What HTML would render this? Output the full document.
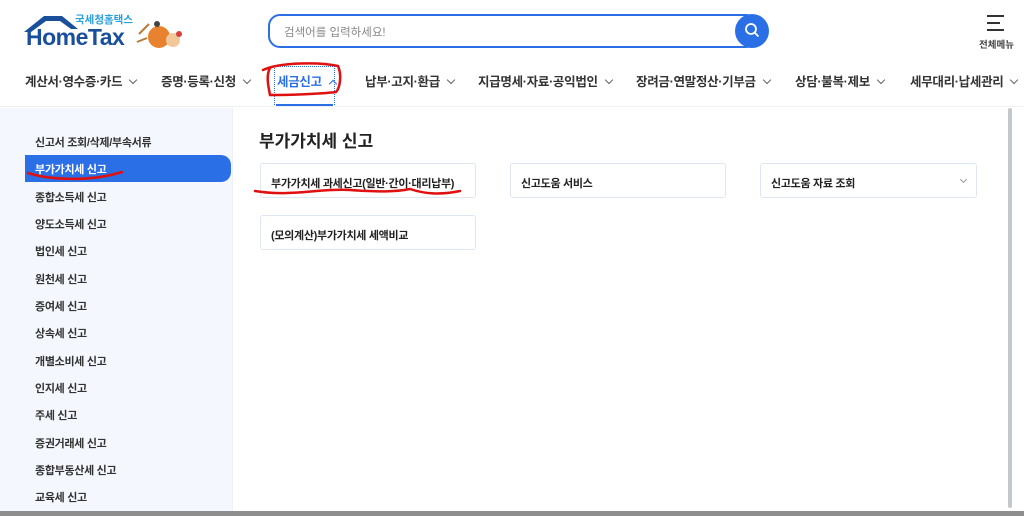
<!DOCTYPE html>
<html><head><meta charset="utf-8"><style>
*{margin:0;padding:0;box-sizing:border-box}
body{width:1024px;height:516px;overflow:hidden;background:#fff;font-family:"Liberation Sans","Noto Sans CJK KR",sans-serif;position:relative;color:#222}
.a{position:absolute;white-space:nowrap}
.nav{top:71px;font-size:12.5px;font-weight:bold;color:#333;letter-spacing:-0.3px}
.chev{display:inline-block;width:6px;height:6px;border-right:1.3px solid #666;border-bottom:1.3px solid #666;transform:rotate(45deg);margin-left:8px;position:relative;top:-3px}
.side{position:absolute;left:0;top:108px;width:233px;height:404px;background:#f4f7fd;border-right:1px solid #eef0f5}
.si{position:absolute;left:35px;font-size:11px;font-weight:bold;color:#333;letter-spacing:-0.3px}
.card{position:absolute;border:1px solid #dfe6f3;border-radius:3px;background:#fff;height:35px;font-size:11px;font-weight:bold;padding:11px 0 0 10px;color:#222;white-space:nowrap;letter-spacing:-0.3px}
</style></head><body>
<!-- logo -->
<svg class="a" style="left:22px;top:12px" width="110" height="40">
<path d="M2 20 L22 4 L40 4 L56 17 L49 17 L38 9 L24 9 L9 20 Z" fill="#1a4f9c"/>
</svg>
<div class="a" style="left:75px;top:12px;font-size:10.5px;color:#2aa0dc;font-weight:bold">국세청홈택스</div>
<div class="a" style="left:26px;top:24px;font-size:23px;font-weight:bold;color:#1a4f9c;letter-spacing:-0.5px">HomeTax</div>
<svg class="a" style="left:135px;top:16px" width="50" height="34">
<circle cx="24" cy="21" r="11" fill="#e9822e"/><circle cx="38" cy="24" r="7" fill="#f2c79a"/><path d="M4 18 L14 8 M2 26 L12 22" stroke="#b87a3b" stroke-width="2"/><circle cx="22" cy="8" r="3" fill="#444"/><circle cx="44" cy="18" r="3" fill="#d94040"/>
</svg>
<!-- search -->
<div class="a" style="left:268px;top:14px;width:490px;height:34px;border:2px solid #2b6fe6;border-radius:12px"></div>
<div class="a" style="left:284px;top:24px;font-size:11.5px;color:#888">검색어를 입력하세요!</div>
<div class="a" style="left:735px;top:14px;width:34px;height:34px;border-radius:50%;background:#2b6fe6"></div>
<svg class="a" style="left:744px;top:22px" width="16" height="16"><circle cx="7" cy="7" r="5" fill="none" stroke="#fff" stroke-width="1.8"/><path d="M11 11 L14.5 14.5" stroke="#fff" stroke-width="1.8"/></svg>
<!-- menu -->
<div class="a" style="left:987px;top:15px;width:17px;height:1.5px;background:#333"></div>
<div class="a" style="left:987px;top:22px;width:13px;height:1.5px;background:#333"></div>
<div class="a" style="left:987px;top:29px;width:17px;height:1.5px;background:#333"></div>
<div class="a" style="left:979px;top:37px;font-size:9.5px;font-weight:bold;color:#444">전체메뉴</div>
<!-- nav -->
<div class="a nav" style="left:25px">계산서·영수증·카드<span class="chev"></span></div>
<div class="a nav" style="left:161px">증명·등록·신청<span class="chev"></span></div>
<div class="a nav" style="left:277px;color:#2b6fe6">세금신고<span class="chev" style="transform:rotate(225deg);top:1px;border-color:#2b6fe6"></span></div>
<div class="a nav" style="left:365px">납부·고지·환급<span class="chev"></span></div>
<div class="a nav" style="left:478px">지급명세·자료·공익법인<span class="chev"></span></div>
<div class="a nav" style="left:636px">장려금·연말정산·기부금<span class="chev"></span></div>
<div class="a nav" style="left:795px">상담·불복·제보<span class="chev"></span></div>
<div class="a nav" style="left:910px">세무대리·납세관리<span class="chev"></span></div>
<div class="a" style="left:274px;top:66px;width:61px;height:39px;border:1px dotted #2b6fe6"></div>
<div class="a" style="left:276px;top:104px;width:57px;height:2px;background:#2b6fe6"></div>
<div class="a" style="left:0;top:106px;width:1024px;height:1px;background:#eef0f4"></div>
<!-- sidebar -->
<div class="side"></div>
<div class="a" style="left:25px;top:155px;width:206px;height:27px;background:#2b6fe6;border-radius:0 10px 10px 0"></div>
<div class="si" style="top:134px">신고서 조회/삭제/부속서류</div>
<div class="si" style="top:161px;color:#fff">부가가치세 신고</div>
<div class="si" style="top:189px">종합소득세 신고</div>
<div class="si" style="top:216px">양도소득세 신고</div>
<div class="si" style="top:243px">법인세 신고</div>
<div class="si" style="top:271px">원천세 신고</div>
<div class="si" style="top:298px">증여세 신고</div>
<div class="si" style="top:325px">상속세 신고</div>
<div class="si" style="top:353px">개별소비세 신고</div>
<div class="si" style="top:380px">인지세 신고</div>
<div class="si" style="top:407px">주세 신고</div>
<div class="si" style="top:435px">증권거래세 신고</div>
<div class="si" style="top:462px">종합부동산세 신고</div>
<div class="si" style="top:489px">교육세 신고</div>
<!-- content -->
<div class="a" style="left:259px;top:127px;font-size:17px;font-weight:bold;color:#222">부가가치세 신고</div>
<div class="card" style="left:260px;top:163px;width:216px">부가가치세 과세신고(일반·간이·대리납부)</div>
<div class="card" style="left:510px;top:163px;width:216px">신고도움 서비스</div>
<div class="card" style="left:760px;top:163px;width:217px">신고도움 자료 조회<span class="chev" style="position:absolute;left:200px;top:13px;width:5px;height:5px;border-color:#999;margin:0"></span></div>
<div class="card" style="left:260px;top:215px;width:216px">(모의계산)부가가치세 세액비교</div>
<!-- scrollbar -->
<div class="a" style="left:1009px;top:108px;width:15px;height:404px;background:#fff"></div>
<div class="a" style="left:1008px;top:108px;width:4px;height:400px;background:#c4c7cc;border-radius:2px"></div>
<div class="a" style="left:0;top:511px;width:1024px;height:5px;background:#8e8e8e"></div>
<!-- red scribbles -->
<svg class="a" style="left:0;top:0" width="1024" height="516">
<g fill="none" stroke="#e01010" stroke-width="2.5" stroke-linecap="round">
<path d="M263 70 C280 62 320 62 338 66 C342 75 340 88 336 92 C320 94 290 95 270 95 C268 85 266 75 270 68"/>
<path d="M28 173 C50 180 90 182 122 172"/>
<path d="M255 191 C290 197 320 188 350 190 C380 192 395 192 410 189 C425 194 440 195 460 191"/>
</g></svg>
</body></html>
